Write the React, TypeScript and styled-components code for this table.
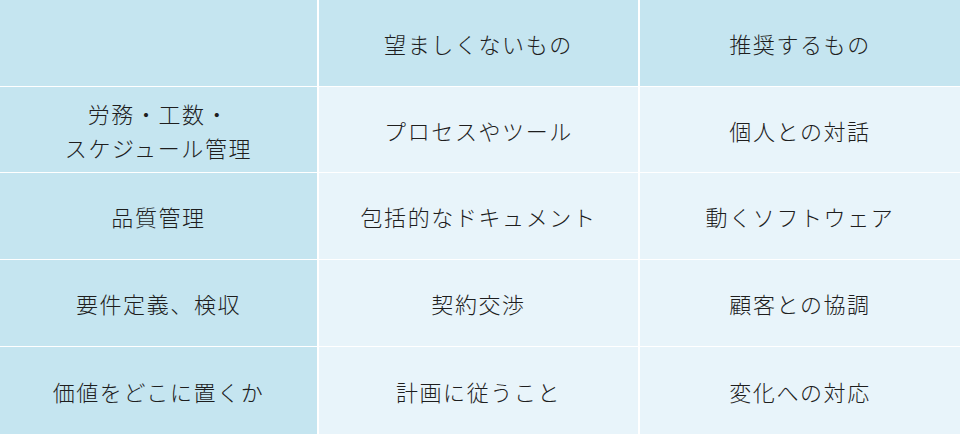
import React from 'react'
import styled, { createGlobalStyle } from 'styled-components'

const GlobalStyle = createGlobalStyle`
  html, body {
    margin: 0;
    padding: 0;
    background: #ffffff;
  }
`

const HEAD_BG = '#c5e5f0'
const BODY_BG = '#e8f4fa'

const rows: { label: string[]; bad: string; good: string }[] = [
  { label: ['労務・工数・', 'スケジュール管理'], bad: 'プロセスやツール', good: '個人との対話' },
  { label: ['品質管理'], bad: '包括的なドキュメント', good: '動くソフトウェア' },
  { label: ['要件定義、検収'], bad: '契約交渉', good: '顧客との協調' },
  { label: ['価値をどこに置くか'], bad: '計画に従うこと', good: '変化への対応' },
]

const App = () => {
  return (
    <>
      <GlobalStyle />
      <Table>
        <Cell head />
        <Cell head>望ましくないもの</Cell>
        <Cell head>推奨するもの</Cell>
        {rows.map((r) => (
          <React.Fragment key={r.bad}>
            <Cell head>
              {r.label.map((l) => (
                <Line key={l}>{l}</Line>
              ))}
            </Cell>
            <Cell>{r.bad}</Cell>
            <Cell>{r.good}</Cell>
          </React.Fragment>
        ))}
      </Table>
    </>
  )
}

export default App

const Table = styled.div`
  display: grid;
  grid-template-columns: 317px 319px 320px;
  grid-template-rows: 86px 85px 86px 86px 87px;
  column-gap: 2px;
  row-gap: 1px;
  width: 960px;
  height: 434px;
  background: #ffffff;
  font-family: 'Noto Sans CJK JP', 'Noto Sans', sans-serif;
  font-weight: 300;
`

const Cell = styled.div<{ head?: boolean }>`
  display: flex;
  flex-direction: column;
  align-items: center;
  justify-content: center;
  background: ${({ head }) => (head ? HEAD_BG : BODY_BG)};
  color: #1e1e1e;
  font-size: 22px;
  letter-spacing: 1.6px;
  line-height: 34px;
  text-align: center;
`

const Line = styled.span`
  display: block;
`
